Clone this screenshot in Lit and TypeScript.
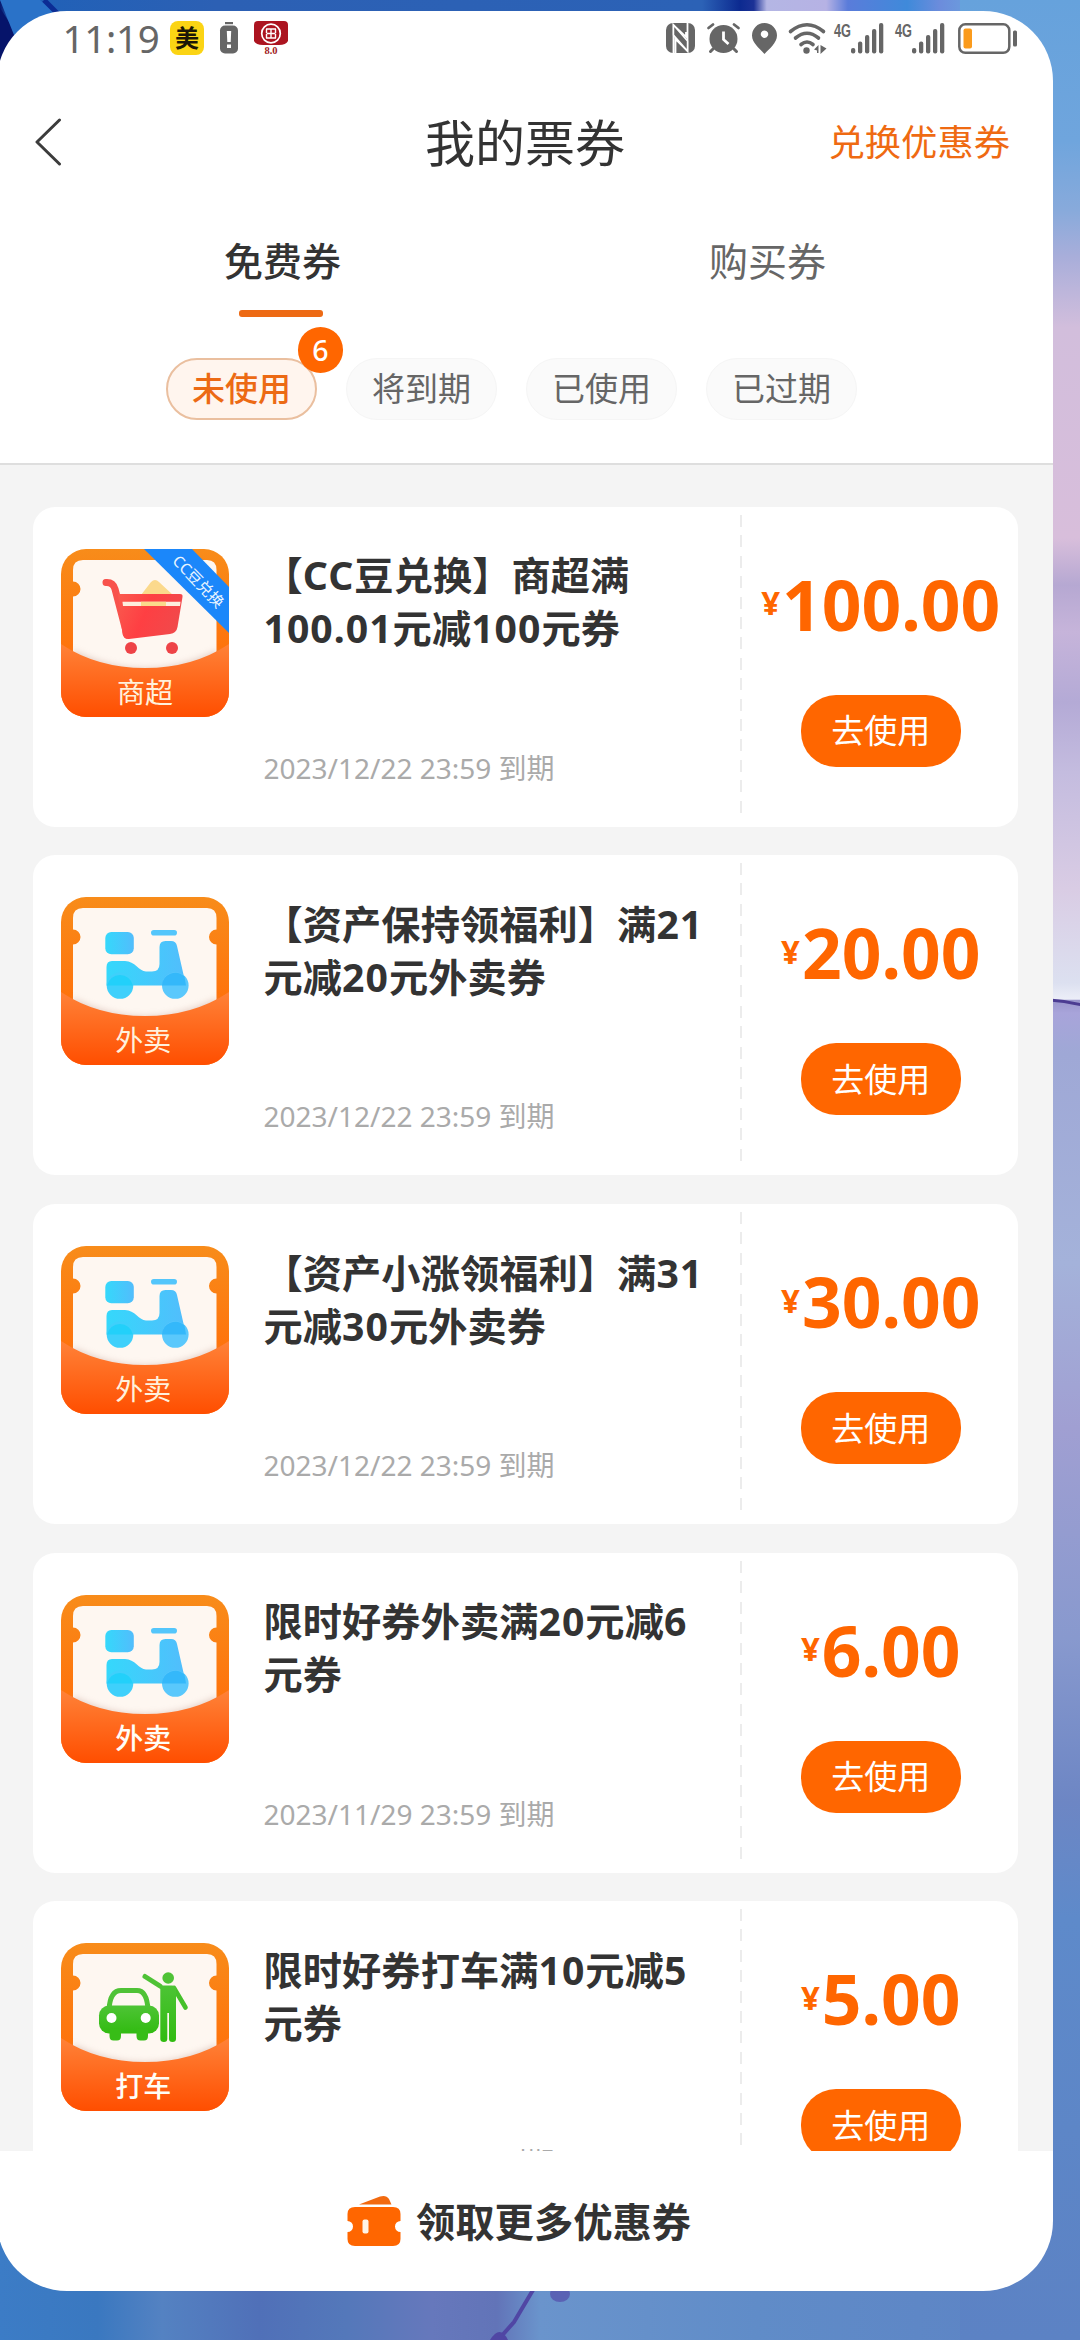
import { LitElement, html, svg, css, nothing } from "lit";
import { customElement, property } from "lit/decorators.js";
import { classMap } from "lit/directives/class-map.js";

type Kind = "market" | "takeout" | "taxi";

interface Coupon {
  kind: Kind;
  label: string;
  strong: boolean;
  ribbon?: string;
  title: string;
  price: string;
  expires: string;
}

const COUPONS: Coupon[] = [
  { kind: "market", label: "商超", strong: false, ribbon: "CC豆兑换", title: "【CC豆兑换】商超满100.01元减100元券", price: "100.00", expires: "2023/12/22 23:59 到期" },
  { kind: "takeout", label: "外卖", strong: false, title: "【资产保持领福利】满21元减20元外卖券", price: "20.00", expires: "2023/12/22 23:59 到期" },
  { kind: "takeout", label: "外卖", strong: false, title: "【资产小涨领福利】满31元减30元外卖券", price: "30.00", expires: "2023/12/22 23:59 到期" },
  { kind: "takeout", label: "外卖", strong: true, title: "限时好券外卖满20元减6元券", price: "6.00", expires: "2023/11/29 23:59 到期" },
  { kind: "taxi", label: "打车", strong: true, title: "限时好券打车满10元减5元券", price: "5.00", expires: "2023/11/29 23:59 到期" },
];

const cart = svg`
  <path d="M80 46 L90 33 Q94 29 98 33 L112 46Z" fill="#fbd98c"/>
  <path d="M45 33.5 Q52 33 54 40 L66 86" fill="none" stroke="#f8524c" stroke-width="7" stroke-linecap="round" stroke-linejoin="round"/>
  <path d="M57 45 H119 Q122 45 121.500 48 L116.500 78 Q115.500 84 109 85 L68 90 Q63 90.500 61.500 85Z" fill="url(#red)"/>
  <path d="M61.500 52.800 H119.500 L119 57 H62Z" fill="#fdeede"/>
  <path d="M80 52.800 H105 V57 H80Z" fill="#fbd98c"/>
  <circle cx="70" cy="99" r="6" fill="#ee4347"/>
  <circle cx="111" cy="99" r="6" fill="#ee4347"/>`;

const scooter = svg`
  <rect x="44.300" y="35" width="28.500" height="22.300" rx="6" fill="url(#sky)"/>
  <rect x="90" y="33" width="26" height="5.600" rx="2.800" fill="#54c6fb"/>
  <path d="M51 64 H64 C74 64 78 74.500 85 74.500 H91 Q98.500 74.500 98.500 67 V50 Q98.500 44 104.500 44 H110 Q115 44 116 49 L125 88.500 H45.500 V70 Q45.500 64 51 64Z" fill="url(#sky)"/>
  <circle cx="59" cy="88.500" r="13.300" fill="#3fd0fb"/>
  <circle cx="114.300" cy="88.500" r="13.300" fill="#5ac8fc"/>
  <path d="M46 88.500 A13.300 13.300 0 0 1 72 88.500Z" fill="#22d0fa"/>
  <path d="M101 88.500 A13.300 13.300 0 0 1 123.500 79.500 L125 88.500Z" fill="#34b8fa"/>`;

const taxi = svg`
  <path d="M48 67 Q49 47.500 60 47.500 H76 Q86 47.500 87 67" fill="none" stroke="#4fc236" stroke-width="5"/>
  <rect x="38" y="62.500" width="60" height="28" rx="10" fill="url(#green)"/>
  <path d="M48.500 86 H60 V93 Q60 97.500 56 97.500 H52.500 Q48.500 97.500 48.500 93Z M75.500 86 H87 V93 Q87 97.500 83 97.500 H79.500 Q75.500 97.500 75.500 93Z" fill="#37bd17"/>
  <circle cx="50.500" cy="75" r="5" fill="#fff"/>
  <circle cx="84.700" cy="75" r="5" fill="#fff"/>
  <circle cx="107.200" cy="35" r="5.800" fill="#4fc236"/>
  <path d="M84 33.500 L99 43" fill="none" stroke="#4fc236" stroke-width="5" stroke-linecap="round"/>
  <path d="M113 45 L124.500 64.500" fill="none" stroke="#45c02a" stroke-width="4.600" stroke-linecap="round"/>
  <path d="M97 41 L101 42.500 H111 Q115 42.500 115 47 V96 Q115 99 111.500 99 Q108 99 108 96 V70 H106.300 V96 Q106.300 99 103 99 Q99.300 99 99.300 96 V46Z" fill="url(#green)"/>`;

const PICTURES = { market: cart, takeout: scooter, taxi };

@customElement("coupon-badge")
export class CouponBadge extends LitElement {
  @property({ attribute: false }) coupon!: Coupon;

  static styles = css`
    :host { display: block; flex: none; width: 168px; height: 168px; }
    .art { display: block; }
    .label { font: 400 28px "Noto Sans", "Noto Sans CJK SC", sans-serif; fill: #fff1dc; }
    .label.strong { font-weight: 500; fill: #fffdf6; }
    .ribbon { font: 400 15.500px "Noto Sans", "Noto Sans CJK SC", sans-serif; fill: #eaf5ff; }
  `;

  render() {
    const c = this.coupon;
    return html`<svg class="art" width="168" height="168" viewBox="0 0 168 168">
      <defs>
        <linearGradient id="back" x1="0" y1="0" x2="0" y2="1"><stop offset="0" stop-color="#f88c1a"/><stop offset=".7" stop-color="#ff6f0a"/></linearGradient>
        <linearGradient id="pocket" x1="0" y1="0" x2="0" y2="1"><stop offset="0" stop-color="#ff8238"/><stop offset="1" stop-color="#ff4e00"/></linearGradient>
        <linearGradient id="red" x1="0" y1="0" x2="1" y2=".3"><stop offset="0" stop-color="#fa5a4e"/><stop offset=".5" stop-color="#fe3f43"/><stop offset="1" stop-color="#f2484a"/></linearGradient>
        <linearGradient id="sky" x1="0" y1="0" x2="1" y2="0"><stop offset="0" stop-color="#35d8fb"/><stop offset="1" stop-color="#52bdfc"/></linearGradient>
        <linearGradient id="green" x1="0" y1="0" x2="0" y2="1"><stop offset="0" stop-color="#4ec436"/><stop offset="1" stop-color="#31bb10"/></linearGradient>
        <clipPath id="tile"><rect width="168" height="168" rx="25"/></clipPath>
        <filter id="soft" x="-10%" y="-30%" width="120%" height="160%"><feGaussianBlur stdDeviation="3"/></filter>
      </defs>
      <g clip-path="url(#tile)">
        <rect width="168" height="168" fill="url(#back)"/>
        <path d="M22 11 H146 Q155.500 11 155.500 21 V32.500 A7.500 7.500 0 0 0 155.500 47.500 V130 H12 V47.500 A7.500 7.500 0 0 0 12 32.500 V21 Q12 11 22 11Z" fill="#fef7f1"/>
        ${PICTURES[c.kind]}
        <path d="M12 101 Q84 137 156 101 V130 H12Z" fill="#c9a79c" opacity=".5" filter="url(#soft)"/>
        <path d="M0 95 Q36 119 84 119 T168 95 V168 H0Z" fill="url(#pocket)"/>
        <text class=${classMap({ label: true, strong: c.strong })} x=${c.ribbon ? 84 : 82.3} y="154" text-anchor="middle">${c.label}</text>
        ${c.ribbon
          ? svg`<path d="M83 0 H131 L168 38 V84Z" fill="#1b87fa"/>
            <text class="ribbon" x="0" y="5" text-anchor="middle" transform="translate(137 33) rotate(46)">${c.ribbon}</text>`
          : nothing}
      </g>
    </svg>`;
  }
}

@customElement("coupon-card")
export class CouponCard extends LitElement {
  @property({ attribute: false }) coupon!: Coupon;

  static styles = css`
    :host { display: flex; flex: none; height: 320px; background: #fff; border-radius: 22px; box-sizing: border-box; }
    .badge { margin: 42px 0 0 27.500px; }
    .body { display: flex; flex-direction: column; justify-content: space-between; width: 450px; margin-left: 35px; padding: 41.500px 0 39px; box-sizing: border-box; }
    .title { width: 446px; font-size: 39.200px; line-height: 53px; font-weight: 700; color: #333; letter-spacing: 0.100px; }
    .latin { letter-spacing: 1px; }
    .date { font-size: 28px; line-height: 40px; color: #aaa; white-space: nowrap; }
    .dash { width: 2px; margin: 8px 0 10px 26px; background: repeating-linear-gradient(to bottom, #ececec 0 12px, transparent 12px 20.400px); }
    .side { flex: 1; display: flex; flex-direction: column; align-items: center; padding: 48px 0 0 2px; }
    .price { display: flex; align-items: center; gap: 2px; height: 98px; color: #ff6600; font-weight: 700; font-size: 69.500px; line-height: 98px; }
    .yen { font-size: 33px; line-height: 40px; padding-bottom: 1px; }
    .use { display: flex; align-items: center; justify-content: center; width: 160px; height: 72px; margin-top: 42px; border: 0; padding: 0 0 3px; border-radius: 35px; box-sizing: border-box; background: #ff6600; color: #fff; font: inherit; font-size: 33px; }
  `;

  private title() {
    return this.coupon.title
      .split(/([0-9A-Z.]+)/)
      .map((part, i) => (i % 2 ? html`<span class="latin">${part}</span>` : part));
  }

  render() {
    const c = this.coupon;
    return html`
      <coupon-badge class="badge" .coupon=${c}></coupon-badge>
      <div class="body">
        <div class="title">${this.title()}</div>
        <div class="date">${c.expires}</div>
      </div>
      <div class="dash"></div>
      <div class="side">
        <div class="price"><span class="yen">¥</span><span>${c.price}</span></div>
        <button class="use">去使用</button>
      </div>`;
  }
}

const signal = svg`
  <text class="net" x="0" y="13.500" textLength="17" lengthAdjust="spacingAndGlyphs">4G</text>
  <g class="ink"><rect x="17" y="25" width="4.300" height="5.500" rx="2"/><rect x="24" y="18.500" width="4.300" height="12" rx="2"/><rect x="31" y="12" width="4.300" height="18.500" rx="2"/><rect x="38" y="6" width="4.300" height="24.500" rx="2"/><rect x="45" y="0" width="4.300" height="30.500" rx="2"/></g>`;

@customElement("status-bar")
export class StatusBar extends LitElement {
  static styles = css`
    :host { display: flex; align-items: center; height: 54px; padding: 0 36px 0 62.500px; box-sizing: border-box; color: #666; }
    .time { font-size: 38.500px; line-height: 54px; letter-spacing: -0.300px; width: 107.500px; padding-bottom: 1px; }
    .apps, .system { display: flex; align-items: center; }
    .system { margin-left: auto; }
    .apps { gap: 15px; }
    .icon { display: block; overflow: visible; }
    .ink { fill: #666; }
    .line { fill: none; stroke: #666; }
    .alarm { margin-left: 12px; }
    .pin { margin-left: 12px; }
    .wifi { margin-left: 12px; }
    .cell { margin-left: 7px; }
    .cell2 { margin-left: 11px; }
    .battery { margin-left: 13px; }
    .net { font: 700 18.500px "Liberation Sans", sans-serif; fill: #666; }
    .mei { font: 700 24px "Noto Sans CJK SC", sans-serif; fill: #1c1606; }
    .ver { font: 700 10.500px "Liberation Serif", serif; fill: #a01a22; }
  `;

  render() {
    return html`
      <span class="time">11:19</span>
      <div class="apps">
        <svg class="icon" width="34" height="34"><rect width="34" height="34" rx="8" fill="#fbd414"/><text class="mei" x="17" y="26" text-anchor="middle">美</text></svg>
        <svg class="icon" width="20" height="32"><rect class="ink" x="6" y="0" width="8" height="2.200"/><rect class="ink" x="1" y="3.500" width="18" height="28" rx="5"/><path d="M7.800 9 H12.200 L11.700 20 H8.300Z M8 22.500 H12 V26 H8Z" fill="#fff"/></svg>
        <svg class="icon" width="34" height="34">
          <path d="M4 0 H30 Q34 0 34 4 V20 Q32 24 25 24 H9 Q2 24 0 20 V4 Q0 0 4 0Z" fill="#ac1420"/>
          <circle cx="17" cy="12.500" r="9.300" fill="none" stroke="#fff" stroke-width="1.700"/>
          <path d="M12 8 H22 M12.500 8 V12 M17 8 V17 M12.500 12.500 H21.500 M21.500 8 V12 M12 17 H22 M21.500 13 V17 M12.500 13 V17" fill="none" stroke="#fff" stroke-width="1.400"/>
          <text class="ver" x="17" y="33" text-anchor="middle">8.0</text>
        </svg>
      </div>
      <div class="system">
        <svg class="icon" width="29" height="30"><rect class="ink" width="29" height="30" rx="7"/><path d="M7.500 30 V2 L20 14 V9 M21.500 0 V28 L9.500 16 V30" fill="none" stroke="#fff" stroke-width="1.800"/><path d="M7.500 2 L21.500 18 V28 L7.500 12Z" fill="#666" stroke="#fff" stroke-width="1.500"/></svg>
        <svg class="icon alarm" width="33" height="30"><circle class="ink" cx="16.500" cy="16" r="14"/><path class="line" d="M1.500 5 L6 1.500 M31.500 5 L27 1.500" stroke-width="2.800" stroke-linecap="round"/><path class="line" d="M6 26 L3.500 28.500 M27 26 L29.500 28.500" stroke-width="3" stroke-linecap="round"/><path d="M16.500 8.500 V16.500 L21.500 21" fill="none" stroke="#fff" stroke-width="2.800"/></svg>
        <svg class="icon pin" width="25" height="31"><path class="ink" fill-rule="evenodd" d="M12.500 0 A12.500 12.500 0 0 1 25 12.500 C25 20 17 26 12.500 31 C8 26 0 20 0 12.500 A12.500 12.500 0 0 1 12.500 0Z M12.500 7.500 a3.700 3.700 0 1 0 .01 0Z"/></svg>
        <svg class="icon wifi" width="38" height="31"><path class="line" d="M1.500 8.500 Q18 -5 34.500 8.500 M6.500 15 Q18 5.500 29.500 15 M12 21.500 Q18 16.500 24 21.500" stroke-width="3.600" stroke-linecap="round"/><circle class="ink" cx="17.500" cy="27.500" r="3.200"/><path class="ink" d="M29.500 22 V30 H28 V27.500 L25 26.500Z M31.500 22 V31 L37.500 25.500Z"/></svg>
        <svg class="icon cell" width="50" height="31">${signal}</svg>
        <svg class="icon cell2" width="50" height="31">${signal}</svg>
        <svg class="icon battery" width="59" height="31"><rect class="line" x="1.300" y="1.300" width="50" height="28.500" rx="6" stroke-width="2.500"/><rect x="5.500" y="5.500" width="8.500" height="20" rx="2" fill="#fb9b1c"/><rect class="ink" x="55" y="7.500" width="4" height="16" rx="1.500"/></svg>
      </div>`;
  }
}

@customElement("app-root")
export class AppRoot extends LitElement {
  static styles = css`
    :host { display: grid; grid-template: 2340px / 1080px; overflow: hidden; font-family: "Noto Sans", "Noto Sans CJK SC", sans-serif; }
    .wallpaper { grid-area: 1 / 1; display: block; }
    .panel { grid-area: 1 / 1; display: flex; flex-direction: column; width: 1056px; height: 2280px; margin: 11px 0 0 -3px; padding-left: 3px; box-sizing: border-box; border-radius: 70px; background: #fff; overflow: hidden; }
    .nav { flex: none; display: grid; grid-template-columns: 1fr auto 1fr; align-items: center; height: 154px; padding: 0 43px 0 34px; }
    .back { display: block; }
    .heading { font-size: 50px; line-height: 72px; color: #333; padding: 1px 0 0 6px; }
    .redeem { justify-self: end; font-size: 36.300px; line-height: 54px; color: #ef6a12; }
    .tabs { flex: none; display: grid; grid-template-columns: 485px 485px; padding-left: 40px; height: 98px; }
    .tab { display: flex; flex-direction: column; align-items: center; justify-content: space-between; font-size: 39px; color: #666; line-height: 84px; }
    .tab.on { color: #333; font-weight: 500; }
    .bar { width: 84px; height: 7px; margin-right: 4px; border-radius: 3px; background: #ed6a14; }
    .filters { flex: none; display: flex; gap: 29px; padding: 41px 0 43px 166px; border-bottom: 2px solid #dedede; }
    .pill { position: relative; display: flex; align-items: center; justify-content: center; width: 151px; height: 62px; box-sizing: border-box; padding-bottom: 5px; border: 1px solid #f5f5f5; border-radius: 31px; background: #fafafa; color: #666; font-size: 33px; }
    .pill.on { border: 2px solid #eabf9f; background: #fff5ee; color: #ec6a14; font-weight: 500; padding-bottom: 5px; }
    .count { position: absolute; left: 130px; top: -33px; width: 45px; height: 46px; border-radius: 23px; background: #ff6600; color: #fff; font-size: 28.500px; line-height: 47px; font-weight: 500; text-align: center; }
    .list { flex: 1; min-height: 0; overflow: hidden; display: flex; flex-direction: column; gap: 28.700px; padding: 41.700px 35px 0 33px; background: #f4f4f4; }
    .more { flex: none; display: flex; align-items: center; gap: 15px; height: 140.500px; padding: 0 0 0 347px; font-size: 39.300px; font-weight: 700; color: #333; }
    .more-text { padding-bottom: 1px; }
  `;

  private wallpaper() {
    return html`<svg class="wallpaper" width="1080" height="2340" viewBox="0 0 1080 2340">
      <defs>
        <linearGradient id="top"><stop offset="0" stop-color="#08186e"/><stop offset=".01" stop-color="#1f61b8"/><stop offset=".2" stop-color="#2c60b4"/><stop offset=".65" stop-color="#2c62b6"/><stop offset=".685" stop-color="#0c2a90"/><stop offset=".698" stop-color="#1c3296"/><stop offset=".71" stop-color="#b4b6e4"/><stop offset=".765" stop-color="#b6b2e4"/><stop offset=".785" stop-color="#5a7cda"/><stop offset=".84" stop-color="#3f8ada"/><stop offset=".87" stop-color="#6c8cdc"/><stop offset=".91" stop-color="#6aa6de"/><stop offset="1" stop-color="#66a2dc"/></linearGradient>
        <linearGradient id="side" x1="0" y1="0" x2="0" y2="1"><stop offset="0" stop-color="#66a2dc"/><stop offset=".06" stop-color="#6fa5dd"/><stop offset=".09" stop-color="#88aadb"/><stop offset=".11" stop-color="#a9aeda"/><stop offset=".14" stop-color="#d2bedc"/><stop offset=".23" stop-color="#d8bedb"/><stop offset=".25" stop-color="#b6a8d2"/><stop offset=".27" stop-color="#c6b4da"/><stop offset=".3" stop-color="#b4aad6"/><stop offset=".33" stop-color="#c4bcdf"/><stop offset=".38" stop-color="#d9cce4"/><stop offset=".42" stop-color="#dce0f0"/><stop offset=".427" stop-color="#eceef8"/><stop offset=".4275" stop-color="#9a96cc"/><stop offset=".433" stop-color="#a8a4da"/><stop offset=".45" stop-color="#9fa8d6"/><stop offset=".54" stop-color="#a4b2da"/><stop offset=".61" stop-color="#a09fd2"/><stop offset=".7" stop-color="#8899ce"/><stop offset=".77" stop-color="#6d86c4"/><stop offset=".82" stop-color="#5e8aca"/><stop offset="1" stop-color="#5c82c4"/></linearGradient>
        <linearGradient id="bottom"><stop offset="0" stop-color="#3c7cc6"/><stop offset=".09" stop-color="#3a78c0"/><stop offset=".15" stop-color="#5482c2"/><stop offset=".24" stop-color="#5070b8"/><stop offset=".32" stop-color="#5478ba"/><stop offset=".4" stop-color="#6678bc"/><stop offset=".46" stop-color="#6274b8"/><stop offset=".5" stop-color="#6a94cc"/><stop offset=".7" stop-color="#608cc8"/><stop offset="1" stop-color="#5c82c4"/></linearGradient>
      </defs>
      <rect width="1080" height="120" fill="url(#top)"/>
      <rect y="2200" width="1080" height="140" fill="url(#bottom)"/>
      <rect x="960" width="120" height="2340" fill="url(#side)"/>
      <path d="M1050 1000 Q1064 1001 1082 1005" fill="none" stroke="#4c3c92" stroke-width="3"/>
      <path d="M0 8 L34 60 H0Z" fill="#06146a"/>
      <path d="M0 0 H40 L56 14 L20 50Z" fill="#2a72c8"/>
      <path d="M44 0 L58 14" stroke="#0c2c94" stroke-width="5"/>
      <path d="M533 2290 L514 2322 L498 2340" fill="none" stroke="#5046a4" stroke-width="4"/>
      <path d="M490 2340 Q500 2324 508 2340Z" fill="#5046a4"/>
      <ellipse cx="560" cy="2294" rx="10" ry="8" fill="#5a62b4"/>
    </svg>`;
  }

  render() {
    return html`
      ${this.wallpaper()}
      <main class="panel">
        <status-bar></status-bar>
        <header class="nav">
          <svg class="back" width="30" height="48"><path d="M25.500 2 L3 24 L25.500 46" fill="none" stroke="#3c3c3c" stroke-width="3" stroke-linecap="round" stroke-linejoin="round"/></svg>
          <div class="heading">我的票券</div>
          <div class="redeem">兑换优惠券</div>
        </header>
        <div class="tabs">
          <div class="tab on">免费券<span class="bar"></span></div>
          <div class="tab">购买券</div>
        </div>
        <div class="filters">
          <div class="pill on">未使用<span class="count">6</span></div>
          <div class="pill">将到期</div>
          <div class="pill">已使用</div>
          <div class="pill">已过期</div>
        </div>
        <section class="list">
          ${COUPONS.map((c) => html`<coupon-card .coupon=${c}></coupon-card>`)}
        </section>
        <footer class="more">
          <svg width="54" height="52"><path d="M12 9.500 L33 1.500 Q39 -.5 42 4 L44.500 9.500Z" fill="#f26a10"/><path d="M8 12 H46 Q53.500 12 53.500 19 V26 A5.500 5.500 0 0 0 53.500 37 V44 Q53.500 51 46 51 H8 Q.5 51 .5 44 V37 A5.500 5.500 0 0 0 .5 26 V19 Q.5 12 8 12Z" fill="#ff6600"/><rect x="15.500" y="24.500" width="6" height="14" rx="2" fill="#fff4e6"/></svg>
          <span class="more-text">领取更多优惠券</span>
        </footer>
      </main>`;
  }
}
